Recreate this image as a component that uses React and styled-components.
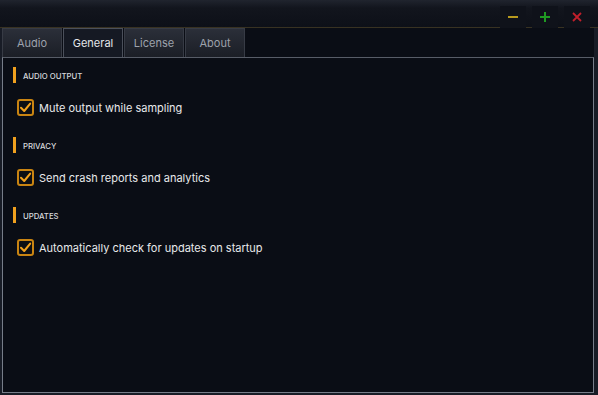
import styled, { createGlobalStyle } from 'styled-components'

const GlobalStyle = createGlobalStyle`
  html, body, #root {
    margin: 0;
    padding: 0;
    width: 100%;
    height: 100%;
  }
  body {
    background: #181c26;
    font-family: Inter, "Noto Sans", sans-serif;
    overflow: hidden;
  }
`

const tabs = ['Audio', 'General', 'License', 'About']

const sections = [
  { title: 'Audio Output', label: 'Mute output while sampling' },
  { title: 'Privacy', label: 'Send crash reports and analytics' },
  { title: 'Updates', label: 'Automatically check for updates on startup' }
]

function WindowIcon ({ kind }) {
  if (kind === 'min') {
    return (
      <svg width='12' height='12' viewBox='0 0 12 12'>
        <rect x='1' y='5' width='10' height='2' fill='#b79a1e' />
      </svg>
    )
  }
  if (kind === 'max') {
    return (
      <svg width='12' height='12' viewBox='0 0 12 12'>
        <rect x='1' y='5' width='10' height='2' fill='#1f9a22' />
        <rect x='5' y='1' width='2' height='10' fill='#1f9a22' />
      </svg>
    )
  }
  return (
    <svg width='12' height='12' viewBox='0 0 12 12'>
      <path d='M2 2 L10 10 M10 2 L2 10' stroke='#c21f2b' strokeWidth='1.8' />
    </svg>
  )
}

function App () {
  return (
    <>
      <GlobalStyle />
      <Window>
        <TitleBar>
          <WinButton><WindowIcon kind='min' /></WinButton>
          <WinButton><WindowIcon kind='max' /></WinButton>
          <WinButton><WindowIcon kind='close' /></WinButton>
        </TitleBar>
        <Body>
          <Inner>
            <TabRow>
              {tabs.map(t => (
                <Tab key={t} $active={t === 'General'}>{t}</Tab>
              ))}
            </TabRow>
            <Panel>
              {sections.map(s => (
                <Section key={s.title}>
                  <Heading>{s.title}</Heading>
                  <CheckRow>
                    <Box>
                      <svg width='13' height='13' viewBox='0 0 13 13'>
                        <path d='M2 6.8 L5.2 10 L11.2 2.6' fill='none' stroke='#f3a21c' strokeWidth='2' strokeLinecap='round' strokeLinejoin='round' />
                      </svg>
                    </Box>
                    <Label>{s.label}</Label>
                  </CheckRow>
                </Section>
              ))}
            </Panel>
          </Inner>
        </Body>
      </Window>
    </>
  )
}

export default App

const Window = styled.div`
  width: 598px;
  height: 395px;
  display: flex;
  flex-direction: column;
  background: #181c26;
`

const TitleBar = styled.div`
  height: 27px;
  flex-shrink: 0;
  display: flex;
  justify-content: flex-end;
  align-items: flex-end;
  gap: 6px;
  padding-right: 8px;
  background: linear-gradient(180deg, #20242e 0px, #12151d 8px, #0d1018 100%);
  border-bottom: 1px solid #383222;
`

const WinButton = styled.div`
  width: 26px;
  height: 22px;
  margin-bottom: -1px;
  display: flex;
  align-items: center;
  justify-content: center;
  background: #0f121a;
`

const Body = styled.div`
  flex: 1;
  display: flex;
  padding: 0 4px 2px 2px;
  min-height: 0;
`

const Inner = styled.div`
  flex: 1;
  display: flex;
  flex-direction: column;
  background: #0a0d15;
`

const TabRow = styled.div`
  display: flex;
  gap: 1px;
  height: 29px;
  flex-shrink: 0;
`

const Tab = styled.div`
  width: 60px;
  box-sizing: border-box;
  display: flex;
  align-items: center;
  justify-content: center;
  font-size: 11px;
  color: ${p => (p.$active ? '#e4e6ea' : '#9da2ac')};
  background: ${p => (p.$active
    ? '#151923'
    : 'linear-gradient(180deg, #2b2f39 0%, #1b1e26 100%)')};
  border: 1px solid ${p => (p.$active ? '#4b505b' : '#373b45')};
  border-bottom: none;
`

const Panel = styled.div`
  flex: 1;
  display: flex;
  flex-direction: column;
  gap: 21px;
  padding: 9px 0 0 10px;
  border: 1px solid #777d89;
  border-top-color: #575c67;
  background: #0a0d15;
`

const Section = styled.div`
  display: flex;
  flex-direction: column;
  gap: 16px;
`

const Heading = styled.div`
  height: 16px;
  box-sizing: border-box;
  display: flex;
  align-items: center;
  padding: 2px 0 0 7px;
  border-left: 3px solid #f0a01e;
  font-size: 7.75px;
  font-weight: 500;
  text-transform: uppercase;
  color: #d6d8dc;
`

const CheckRow = styled.label`
  display: flex;
  align-items: center;
  gap: 5px;
  padding-left: 4px;
`

const Box = styled.span`
  width: 17px;
  height: 17px;
  box-sizing: border-box;
  display: flex;
  align-items: center;
  justify-content: center;
  border: 2px solid #c98412;
  border-radius: 3px;
  background: #0d0f14;
`

const Label = styled.span`
  font-size: 11px;
  color: #e8e9eb;
`
